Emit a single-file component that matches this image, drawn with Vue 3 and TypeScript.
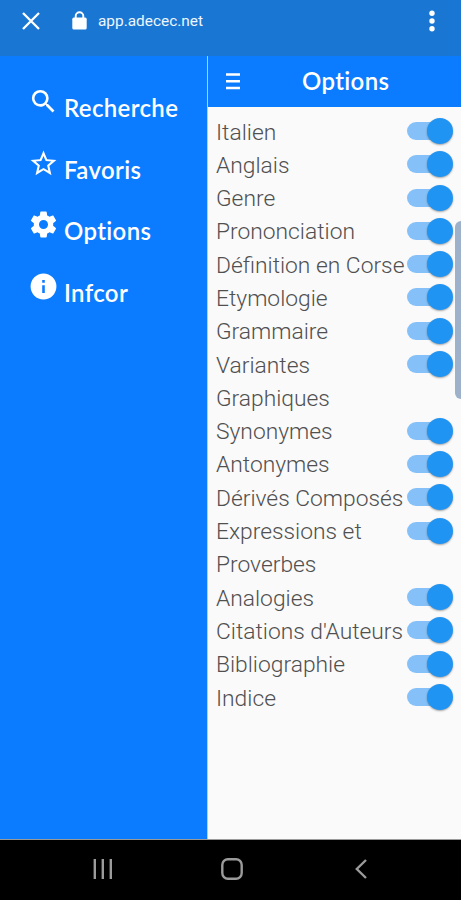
<script setup lang="ts">
import { ref } from 'vue'

interface MenuItem {
  label: string
  icon: string
}
interface Option {
  label: string
  enabled: boolean
}

const menu: MenuItem[] = [
  {
    label: 'Recherche',
    icon: 'M15.5 14h-.79l-.28-.27A6.47 6.47 0 0 0 16 9.5 6.5 6.5 0 1 0 9.5 16c1.61 0 3.09-.59 4.23-1.57l.27.28v.79l5 4.99L20.49 19l-4.99-5zm-6 0a4.5 4.5 0 1 1 0-9 4.5 4.5 0 0 1 0 9z',
  },
  {
    label: 'Favoris',
    icon: 'M22 9.24l-7.19-.62L12 2 9.19 8.63 2 9.24l5.46 4.73L5.82 21 12 17.27 18.18 21l-1.63-7.03L22 9.24zM12 15.4l-3.76 2.27 1-4.28-3.32-2.88 4.38-.38L12 6.1l1.71 4.04 4.38.38-3.32 2.88 1 4.28L12 15.4z',
  },
  {
    label: 'Options',
    icon: 'M19.43 12.98c.04-.32.07-.64.07-.98s-.03-.66-.07-.98l2.11-1.65c.19-.15.24-.42.12-.64l-2-3.46c-.12-.22-.39-.3-.61-.22l-2.49 1c-.52-.4-1.08-.73-1.69-.98l-.38-2.65A.49.49 0 0 0 14 2h-4c-.25 0-.46.18-.49.42l-.38 2.65c-.61.25-1.17.59-1.69.98l-2.49-1c-.23-.09-.49 0-.61.22l-2 3.46c-.13.22-.07.49.12.64l2.11 1.65c-.04.32-.07.65-.07.98s.03.66.07.98l-2.11 1.65c-.19.15-.24.42-.12.64l2 3.46c.12.22.39.3.61.22l2.49-1c.52.4 1.08.73 1.69.98l.38 2.65c.03.24.24.42.49.42h4c.25 0 .46-.18.49-.42l.38-2.65c.61-.25 1.17-.59 1.69-.98l2.49 1c.23.09.49 0 .61-.22l2-3.46c.12-.22.07-.49-.12-.64l-2.11-1.65zM12 15.5a3.5 3.5 0 1 1 0-7 3.5 3.5 0 0 1 0 7z',
  },
  {
    label: 'Infcor',
    icon: 'M12 2a10 10 0 1 0 0 20 10 10 0 0 0 0-20zm1 15h-2v-6h2v6zm0-8h-2V7h2v2z',
  },
]

const options = ref<Option[]>(
  [
    'Italien',
    'Anglais',
    'Genre',
    'Prononciation',
    'Définition en Corse',
    'Etymologie',
    'Grammaire',
    'Variantes Graphiques',
    'Synonymes',
    'Antonymes',
    'Dérivés Composés',
    'Expressions et Proverbes',
    'Analogies',
    "Citations d'Auteurs",
    'Bibliographie',
    'Indice',
  ].map((label) => ({ label, enabled: true })),
)
</script>

<template>
  <div class="screen">
    <header class="browser-bar">
      <svg class="close" viewBox="0 0 18 18"><path d="M1 1l16 16M17 1L1 17" /></svg>
      <svg class="lock" viewBox="0 0 15 19">
        <path class="shackle" d="M3.7 8V5a3.8 3.8 0 0 1 7.6 0v3" />
        <rect x="0.3" y="6.6" width="14.4" height="12" rx="1.6" />
      </svg>
      <span class="url">app.adecec.net</span>
      <svg class="more" viewBox="0 0 6 22">
        <circle cx="3" cy="3.2" r="2.7" />
        <circle cx="3" cy="11" r="2.7" />
        <circle cx="3" cy="18.8" r="2.7" />
      </svg>
    </header>

    <main class="content">
      <nav class="drawer">
        <a v-for="item in menu" :key="item.label" class="menu-item">
          <svg viewBox="0 0 24 24"><path :d="item.icon" /></svg>
          <span>{{ item.label }}</span>
        </a>
      </nav>
      <section class="panel">
        <div class="toolbar">
          <svg class="burger" viewBox="0 0 14 17"><path d="M0 1.5h14M0 8.2h14M0 15h14" /></svg>
          <h1>Options</h1>
        </div>
        <div class="list">
          <div v-for="option in options" :key="option.label" class="row">
            <span class="label">{{ option.label }}</span>
            <button
              class="switch"
              :class="{ on: option.enabled }"
              @click="option.enabled = !option.enabled"
            >
              <i class="thumb"></i>
            </button>
          </div>
        </div>
        <div class="edge-handle"></div>
      </section>
    </main>

    <footer class="nav-bar">
      <svg class="recents" viewBox="0 0 20 20"><path d="M1.8 0v20M9.8 0v20M17.8 0v20" /></svg>
      <svg class="home" viewBox="0 0 22 22"><rect x="1.3" y="1.3" width="19.4" height="19.4" rx="5.6" /></svg>
      <svg class="back" viewBox="0 0 12 20"><path d="M11 1L1.8 10 11 19" /></svg>
    </footer>
  </div>
</template>

<style>
body {
  margin: 0;
  background: #000;
}
</style>

<style scoped>
.screen {
  display: flex;
  flex-direction: column;
  width: 461px;
  height: 900px;
  overflow: hidden;
  font-family: Roboto, sans-serif;
}
svg {
  display: block;
  flex: none;
  fill: #fff;
}
.browser-bar {
  box-sizing: border-box;
  display: flex;
  align-items: center;
  height: 56px;
  padding: 0 26px 15px 22px;
  background: #1976d2;
  color: #eef6ff;
}
.close {
  width: 18px;
  height: 18px;
  stroke: #fff;
  stroke-width: 2.3;
}
.lock {
  width: 15px;
  height: 19px;
  margin-left: 32px;
}
.shackle {
  fill: none;
  stroke: #fff;
  stroke-width: 1.9;
}
.url {
  margin: 1px 0 0 11px;
  font-size: 15.4px;
  line-height: 20px;
}
.more {
  width: 6px;
  height: 22px;
  margin-left: auto;
}
.content {
  display: flex;
  height: 783px;
  border-bottom: 1px solid #9a9a9a;
}
.drawer {
  box-sizing: border-box;
  width: 207px;
  padding: 30px 0 0 30px;
  background: #0b7cff;
}
.menu-item {
  display: flex;
  gap: 8px;
  height: 61.5px;
  color: #fff;
  font: 600 24px/32px Lato, sans-serif;
  letter-spacing: 0.35px;
}
.menu-item svg {
  width: 31px;
  height: 31px;
  margin-left: -2px;
  margin-right: -3px;
}
.menu-item span {
  padding-top: 6px;
}
.panel {
  position: relative;
  flex: 1;
  border-left: 1px solid #a9cdf8;
  background: #fafafa;
}
.toolbar {
  display: flex;
  align-items: center;
  height: 51px;
  padding-left: 18px;
  background: #0b7cff;
}
.burger {
  width: 14px;
  height: 17px;
  margin-top: -1px;
  stroke: #fff;
  stroke-width: 2.6;
}
h1 {
  margin: -2px 0 0 62px;
  color: #fff;
  font: 600 24px/32px Lato, sans-serif;
  letter-spacing: 0.35px;
}
.list {
  padding: 8px 8px 0 8px;
}
.row {
  display: flex;
  justify-content: space-between;
  color: #505050;
  font-size: 22.8px;
  font-weight: 300;
  line-height: 33.3px;
}
.label {
  width: 191px;
  margin: 0.5px -2px -0.5px 0;
}
.switch {
  position: relative;
  flex: none;
  width: 46px;
  height: 18px;
  margin: 7px 0 0;
  padding: 0;
  border: 0;
  border-radius: 9px;
  background: #bbb;
}
.switch.on {
  background: linear-gradient(to right, #85c1f8 38px, transparent 38px);
}
.thumb {
  position: absolute;
  top: -4px;
  left: 0;
  width: 26px;
  height: 26px;
  border-radius: 50%;
  background: #fafafa;
  box-shadow: 0 1px 2px rgba(0, 0, 0, 0.35);
}
.on .thumb {
  left: 20px;
  background: #2094f3;
}
.edge-handle {
  position: absolute;
  top: 165px;
  right: 0;
  width: 6px;
  height: 178px;
  border-radius: 6px 0 0 6px;
  background: #9db2ca;
}
.nav-bar {
  box-sizing: border-box;
  display: flex;
  align-items: center;
  height: 60px;
  padding: 0 94px 3px 93px;
  background: #000;
}
.nav-bar svg {
  fill: none;
  stroke: #9b9b9b;
  stroke-width: 2.4;
}
.recents {
  width: 20px;
  height: 20px;
}
.home {
  width: 22px;
  height: 22px;
  margin-left: 108px;
}
.back {
  width: 12px;
  height: 20px;
  margin-left: auto;
}
</style>
